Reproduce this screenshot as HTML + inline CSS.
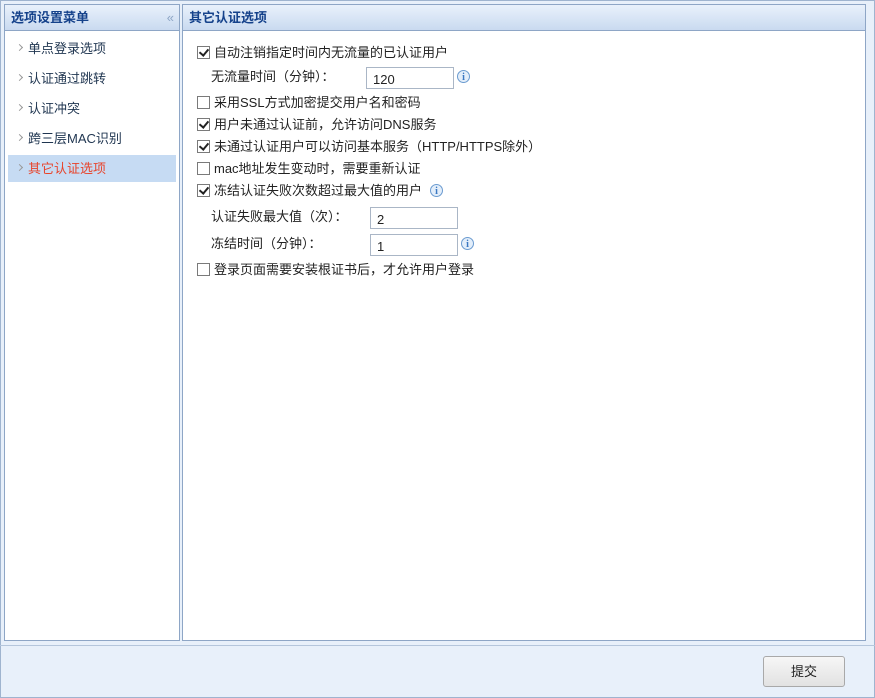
<!DOCTYPE html>
<html><head><meta charset="utf-8"><style>
body{margin:0;width:875px;height:698px;background:#fff;font-family:"Liberation Sans","Noto Sans CJK SC",sans-serif;font-size:13px;color:#222;position:relative;overflow:hidden}
.outer{position:absolute;left:0;top:0;width:873px;height:696px;border:1px solid #9fb4cf;background:#e8f0fa}
.panel{position:absolute;background:#fff;border:1px solid #8ea6c6}
.hd{height:25px;line-height:25px;background:linear-gradient(#e9f1fb,#c9daf0);border-bottom:1px solid #8ea6c6;font-weight:bold;color:#15428b;padding-left:6px;font-size:13px}
.menu div{height:27px;line-height:27px;margin:0 3px;padding-left:20px;position:relative;color:#1f3550;margin-bottom:3px}
.menu div:before{content:"";position:absolute;left:9px;top:10px;width:4px;height:4px;border-right:1.5px solid #999;border-top:1.5px solid #999;transform:rotate(45deg)}
.menu .sel{background:#c6dbf3;color:#e8432a}
.row{position:absolute;left:14px;height:20px;line-height:20px;white-space:nowrap}
.cb{display:inline-block;width:11px;height:11px;border:1px solid #7a7a7a;vertical-align:-2px;margin-right:4px;position:relative;background:#fff}
.cb.on:after{content:"";position:absolute;left:3px;top:0px;width:4px;height:7px;border-right:2px solid #222;border-bottom:2px solid #222;transform:rotate(40deg)}
.inp{position:absolute;height:22px;border:1px solid #aab6c6;background:#fff;line-height:24px;padding-left:6px;box-sizing:border-box}
.info{position:absolute;width:13px;height:13px;border-radius:50%;border:1px solid #6b9bd0;background:#e3eefa;color:#3b78c2;font:bold 10px "Liberation Serif",serif;text-align:center;line-height:13px;box-sizing:border-box}
</style></head><body>
<div class="outer"></div>
<div class="panel" style="left:4px;top:4px;width:174px;height:635px">
<div class="hd">选项设置菜单<span style="position:absolute;right:5px;color:#8ea6c6;font-weight:normal">«</span></div>
<div class="menu" style="padding-top:4px">
<div>单点登录选项</div><div>认证通过跳转</div><div>认证冲突</div><div>跨三层MAC识别</div><div class="sel">其它认证选项</div>
</div></div>
<div class="panel" style="left:182px;top:4px;width:682px;height:635px">
<div class="hd">其它认证选项</div>
<div class="row" style="top:38px"><span class="cb on"></span>自动注销指定时间内无流量的已认证用户</div>
<div class="row" style="top:62px;left:28px">无流量时间（分钟）：</div>
<div class="inp" style="left:183px;top:62px;width:88px">120</div><div class="info" style="left:274px;top:65px">i</div>
<div class="row" style="top:88px"><span class="cb"></span>采用SSL方式加密提交用户名和密码</div>
<div class="row" style="top:110px"><span class="cb on"></span>用户未通过认证前，允许访问DNS服务</div>
<div class="row" style="top:132px"><span class="cb on"></span>未通过认证用户可以访问基本服务（HTTP/HTTPS除外）</div>
<div class="row" style="top:154px"><span class="cb"></span>mac地址发生变动时，需要重新认证</div>
<div class="row" style="top:176px"><span class="cb on"></span>冻结认证失败次数超过最大值的用户 </div><div class="info" style="left:247px;top:179px">i</div>
<div class="row" style="top:202px;left:28px">认证失败最大值（次）：</div>
<div class="inp" style="left:187px;top:202px;width:88px">2</div>
<div class="row" style="top:229px;left:28px">冻结时间（分钟）：</div>
<div class="inp" style="left:187px;top:229px;width:88px">1</div><div class="info" style="left:278px;top:232px">i</div>
<div class="row" style="top:255px"><span class="cb"></span>登录页面需要安装根证书后，才允许用户登录</div>
</div>
<div style="position:absolute;left:0;top:645px;width:875px;border-top:1px solid #b5c6dc"></div>
<div style="position:absolute;left:763px;top:656px;width:80px;height:29px;border:1px solid #a9a9a9;border-radius:3px;background:linear-gradient(#f6f6f6,#e2e2e2);text-align:center;line-height:29px;color:#222">提交</div>
</body></html>
